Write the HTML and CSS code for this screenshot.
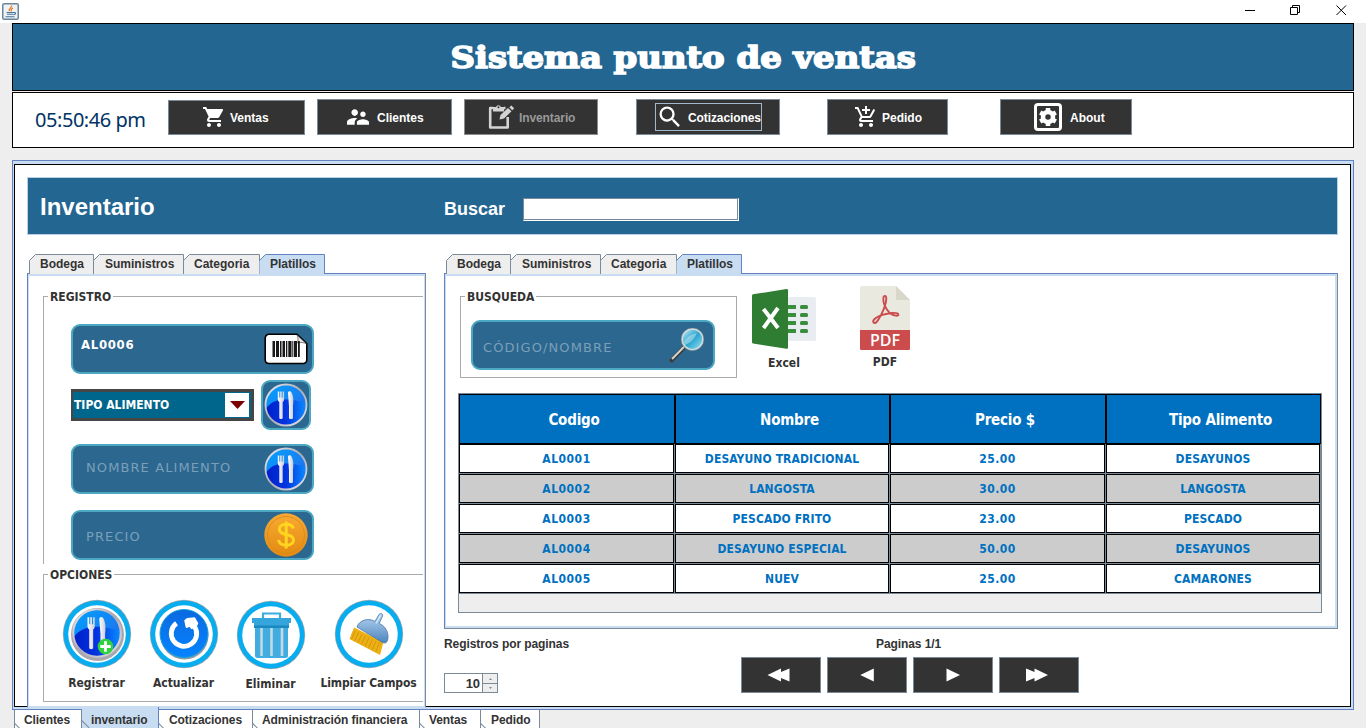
FILE: index.html
```html
<!DOCTYPE html>
<html lang="es">
<head>
<meta charset="utf-8">
<title>Sistema punto de ventas</title>
<link rel="stylesheet" href="styles.css">
</head>
<body>
<svg class="defs" width="0" height="0" aria-hidden="true">
  <defs>
    <linearGradient id="plate" x1="0" y1="0" x2="1" y2="1"><stop offset="0" stop-color="#00a2ff"/><stop offset=".5" stop-color="#1484f5"/><stop offset="1" stop-color="#3560dc"/></linearGradient>
    <linearGradient id="plateLow" x1="0" y1="0" x2="1" y2="0"><stop offset="0" stop-color="#001fc8"/><stop offset=".5" stop-color="#0234e0"/><stop offset="1" stop-color="#0a8cff"/></linearGradient>
    <linearGradient id="silver" x1="0" y1="0" x2="1" y2="1"><stop offset="0" stop-color="#eee"/><stop offset=".5" stop-color="#a9a9b5"/><stop offset="1" stop-color="#e6e6ee"/></linearGradient>
    <linearGradient id="steel" x1="0" y1="0" x2="1" y2="0"><stop offset="0" stop-color="#fff"/><stop offset="1" stop-color="#c9ccd8"/></linearGradient>
    <linearGradient id="coin" x1="0" y1="0" x2="0" y2="1"><stop offset="0" stop-color="#f9aa33"/><stop offset="1" stop-color="#e28a11"/></linearGradient>
    <linearGradient id="lens" x1="0" y1="0" x2="1" y2="1"><stop offset="0" stop-color="#c9eefa"/><stop offset=".5" stop-color="#2aa5cf"/><stop offset="1" stop-color="#9ee6f2"/></linearGradient>
    <linearGradient id="dust" x1="0" y1="0" x2="0" y2="1"><stop offset="0" stop-color="#b5d6f2"/><stop offset="1" stop-color="#4d84bd"/></linearGradient>
    <linearGradient id="refresh" x1="0" y1="0" x2="0" y2="1"><stop offset="0" stop-color="#0b6ae0"/><stop offset="1" stop-color="#0584ff"/></linearGradient>
    <symbol id="cutlery" viewBox="0 0 44 44">
      <circle cx="22" cy="22" r="20" fill="url(#plate)"/>
      <path d="M2.200 25C8 18 14 16.500 22 16.500S36 19 41.800 19A20 20 0 0 1 2.200 25z" fill="url(#plateLow)"/>
      <circle cx="22" cy="22" r="20.500" fill="none" stroke="url(#silver)" stroke-width="1.800"/>
      <g fill="url(#steel)">
        <path d="M13.800 8.500h1.500v6h.9v-6h1.500v6h.9v-6h1.500v7.500c0 1.800-.7 2.500-1.400 3V35c0 1.300-3.400 1.300-3.400 0V19c-.8-.5-1.500-1.200-1.500-3z"/>
        <path d="M24 10c0-1.800 1.800-2.200 3-1.300 2.300 3 2.800 9 2 14.300V35c0 1.300-4 1.300-4 0V23z"/>
      </g>
    </symbol>
    <symbol id="ring" viewBox="0 0 70 70">
      <circle cx="35" cy="35" r="34.200" fill="#a9a9a9"/>
      <circle cx="35" cy="35" r="33.500" fill="#08adf0"/>
      <circle cx="35" cy="35" r="28.800" fill="#fff"/>
    </symbol>
  </defs>
</svg>

<div class="titlebar">
  <svg class="java" width="17" height="17" viewBox="0 0 17 17"><rect x=".75" y=".75" width="15.500" height="15.500" rx="1.500" fill="#eef2f6" stroke="#6b8496" stroke-width="1.500"/><path d="M9.500 2.500c1 2-3.500 3-2 5.500M11 5c-2 1-2.500 1.800-1.500 3.300" fill="none" stroke="#ee8022" stroke-width="1.300"/><path d="M4.500 9.500h7.500M5 11.300h6.200M12 9.500c2.300-.3 2 2-.5 2.200M3.500 13.700h9" fill="none" stroke="#44739a" stroke-width="1.100"/></svg>
  <div class="winctl">
    <svg width="11" height="11" viewBox="0 0 11 11"><path d="M1 5.500h10" stroke="#000" fill="none"/></svg>
    <svg width="11" height="11" viewBox="0 0 11 11"><path d="M.5 2.500h7v7h-7zM2.500 2.500v-2h7v7h-2" stroke="#000" fill="none"/></svg>
    <svg width="11" height="11" viewBox="0 0 11 11"><path d="M.5.5l9.500 9.500M10 .5L.5 10" stroke="#000" fill="none"/></svg>
  </div>
</div>

<header class="brand"><h1>Sistema punto de ventas</h1></header>

<nav class="toolbar">
  <span class="clock">05:50:46 pm</span>
  <button class="nav nav-ventas"><svg width="24" height="24" viewBox="0 0 24 24" fill="#fff"><path d="M7 18c-1.100 0-1.990.9-1.990 2S5.900 22 7 22s2-.9 2-2-.9-2-2-2zM1 2v2h2l3.600 7.590-1.350 2.450c-.16.28-.25.61-.25.96 0 1.100.9 2 2 2h12v-2H7.420c-.14 0-.25-.11-.25-.25l.03-.12.900-1.630h7.450c.75 0 1.410-.41 1.750-1.030l3.580-6.490A1 1 0 0 0 20 4H5.210l-.94-2H1zm16 16c-1.100 0-1.990.9-1.990 2s.89 2 1.990 2 2-.9 2-2-.9-2-2-2z"/></svg>Ventas</button>
  <button class="nav nav-clientes"><svg width="24" height="24" viewBox="0 0 24 24" fill="#fff"><path transform="translate(-1.200 -1.200) scale(1.100)" d="M16.500 12c1.380 0 2.490-1.120 2.490-2.500S17.880 7 16.500 7 14 8.120 14 9.500s1.120 2.500 2.500 2.500zM9 11c1.660 0 2.990-1.340 2.990-3S10.660 5 9 5 6 6.340 6 8s1.340 3 3 3zm7.500 3c-1.830 0-5.500.92-5.500 2.750V19h11v-2.250c0-1.830-3.670-2.750-5.500-2.750zM9 13c-2.330 0-7 1.170-7 3.500V19h7v-2.250c0-.85.33-2.340 2.370-3.470C10.500 13.100 9.660 13 9 13z"/></svg>Clientes</button>
  <button class="nav nav-inventario" disabled><svg width="27" height="26" viewBox="0 0 27 26"><path d="M5 4H2.200v19.500h17.500V13M16 4h1.500" fill="none" stroke="#d3d3d3" stroke-width="2.600" stroke-linejoin="round"/><path d="M5 3h3a2.700 2.700 0 0 1 5 0h3v4.500H5z" fill="#d3d3d3"/><circle cx="10.500" cy="3.200" r="1" fill="#333"/><path d="M11.500 15.500l1-4.500 7.500-7 3.500 3.300-7.500 7.200zM21.300 3.300l2-1.800 2.900 2.800-2 1.900z" fill="#d3d3d3"/></svg>Inventario</button>
  <button class="nav nav-cotizaciones"><span class="focus"><svg width="28" height="28" viewBox="0 0 24 24" fill="#fff"><path d="M15.500 14h-.79l-.28-.27A6.470 6.470 0 0 0 16 9.500 6.500 6.500 0 1 0 9.500 16c1.610 0 3.090-.59 4.230-1.570l.27.280v.790l5 4.990L20.490 19l-4.990-5zm-6 0C7.010 14 5 11.990 5 9.500S7.010 5 9.500 5 14 7.010 14 9.500 11.990 14 9.500 14z"/></svg>Cotizaciones</span></button>
  <button class="nav nav-pedido"><svg width="24" height="24" viewBox="0 0 24 24" fill="#fff"><path d="M11 9h2V6h3V4h-3V1h-2v3H8v2h3v3zm-4 9c-1.100 0-1.990.9-1.990 2S5.900 22 7 22s2-.9 2-2-.9-2-2-2zm10 0c-1.100 0-1.990.9-1.990 2s.89 2 1.990 2 2-.9 2-2-.9-2-2-2zm-9.830-3.250l.03-.12.900-1.630h7.450c.75 0 1.410-.41 1.750-1.030l3.860-7.010L19.420 4h-.01l-1.100 2-2.760 5H8.530l-.13-.27L6.160 6l-.95-2-.94-2H1v2h2l3.600 7.590-1.350 2.450c-.16.280-.25.610-.25.960 0 1.100.9 2 2 2h12v-2H7.420c-.13 0-.25-.11-.25-.25z"/></svg>Pedido</button>
  <button class="nav nav-about"><svg width="28" height="28" viewBox="0 0 28 28"><rect x="1.500" y="1.500" width="25" height="25" rx="2.500" fill="none" stroke="#fff" stroke-width="3"/><circle cx="14" cy="14" r="5" fill="none" stroke="#fff" stroke-width="4.500"/><path d="M14 5v3.500M14 19.500V23M6.200 9.500l3 1.700M18.800 16.800l3 1.700M6.200 18.500l3-1.700M18.800 11.200l3-1.700" stroke="#fff" stroke-width="4.500"/></svg>About</button>
</nav>

<main class="shell">
  <section class="screen">
    <div class="banner">
      <h2>Inventario</h2>
      <label for="buscar">Buscar</label>
      <input id="buscar" class="search" type="text">
    </div>
    <div class="columns">
      <div class="left">
        <div class="tabs">
          <span class="tab w65"><svg width="65" height="20"><path d="M.5 20V6.500L6.500.5H64.500V20" fill="#eee" stroke="#7a8a99"/></svg>Bodega</span>
          <span class="tab w90"><svg width="91" height="20"><path d="M.5 20V6.500L6.500.5H90.500V20" fill="#eee" stroke="#7a8a99"/></svg>Suministros</span>
          <span class="tab w76"><svg width="77" height="20"><path d="M.5 20V6.500L6.500.5H76.500V20" fill="#eee" stroke="#7a8a99"/></svg>Categoria</span>
          <span class="tab w65 on"><svg width="66" height="22"><path d="M.5 22V6.500L6.500.5H65.500V20H64V22z" fill="#c8ddf2"/><path d="M.5 7V6.500L6.500.5H65.500V20" fill="none" stroke="#6382bf"/></svg>Platillos</span>
        </div>
        <div class="pane form-pane">
          <fieldset class="group registro"><legend>REGISTRO</legend>
            <div class="field"><b>AL0006</b>
              <svg width="44" height="32" viewBox="0 0 44 32"><path d="M5 1.200H33L42.800 10.500V27a3.500 3.500 0 0 1-3.500 3.500H5A3.800 3.800 0 0 1 1.200 27V5A3.800 3.800 0 0 1 5 1.200z" fill="#fdfdfd" stroke="#000" stroke-width="1.600"/><path d="M33 2c1.500 3 1 5.500.5 8 3-.8 6-.8 9 1z" fill="#e4e4e4" stroke="#555" stroke-width=".7"/><g fill="#181818"><path d="M8.500 8h2.500v16H8.500zM12 8h3v16h-3zM16 8h1.500v16H16zM18.500 8H21v16h-2.500zM22 8h1.300v16H22zM24.300 8h3.200v16h-3.200zM28.300 8h1v16h-1zM30 8h3v16h-3zM34 8h1.800v16H34z"/></g></svg>
            </div>
            <div class="combo-row">
              <div class="combo"><b>TIPO ALIMENTO</b><span class="drop"><svg width="15" height="8" viewBox="0 0 15 8"><path d="M0 0h15L7.500 8z" fill="#7b0000"/></svg></span></div>
              <div class="field tile"><svg width="44" height="44"><use href="#cutlery"/></svg></div>
            </div>
            <div class="field f-nombre"><span class="ph">NOMBRE ALIMENTO</span><svg width="44" height="44"><use href="#cutlery"/></svg></div>
            <div class="field f-precio"><span class="ph">PRECIO</span>
              <svg width="44" height="44" viewBox="0 0 44 44"><circle cx="22" cy="22" r="21.700" fill="url(#coin)"/><circle cx="22" cy="22" r="18.500" fill="none" stroke="#d98a18" stroke-width=".9"/><path d="M29.300 15.500C28.500 12.500 26 11.300 22.300 11.300c-4 0-7 1.800-7 5 0 7 14.200 3.500 14.200 10.500 0 3.500-3.200 5.400-7.300 5.400s-7-1.700-7.600-5.200M22.200 8.500v27" fill="none" stroke="#ffd51f" stroke-width="3"/></svg>
            </div>
          </fieldset>
          <fieldset class="group opciones"><legend>OPCIONES</legend>
            <div class="action"><svg width="70" height="70" viewBox="0 0 70 70"><use href="#ring"/><circle cx="35.500" cy="35.500" r="26.500" fill="#aaa6ae"/><use href="#cutlery" x="9.500" y="8.500" width="51" height="51"/><circle cx="43.500" cy="47.500" r="7.800" fill="#2fd13c"/><path d="M43.500 42.300v10.400M38.300 47.500h10.400" stroke="#fff" stroke-width="2.800"/></svg><b>Registrar</b></div>
            <div class="action"><svg width="70" height="70" viewBox="0 0 70 70"><use href="#ring"/><circle cx="35.500" cy="36.500" r="24" fill="#8a98a8"/><circle cx="35" cy="34.500" r="24" fill="url(#refresh)" stroke="#18a3dc" stroke-width="1"/><path d="M27.500 24.300A12.700 12.700 0 1 0 45.500 27.500" fill="none" stroke="#fff" stroke-width="4.800"/><path d="M36 21.500l2.500-1.800 7-.6 3 5.200-2 4-4 1-1.500-2.500-3.500 1.500z" fill="#fff" stroke="#fff" stroke-width="1.500" stroke-linejoin="round"/></svg><b>Actualizar</b></div>
            <div class="action low"><svg width="70" height="70" viewBox="0 0 70 70"><use href="#ring"/><path d="M27 18v-4.500h17V18" fill="none" stroke="#3fabdf" stroke-width="2.200"/><path d="M16 18h39v5h-2v4.500H18V23h-2z" fill="#35a5dc"/><path d="M18 25.500h35V28H18z" fill="#1b88c0"/><path d="M19 28h33v27.500a2.500 2.500 0 0 1-2.500 2.500h-28a2.500 2.500 0 0 1-2.500-2.500z" fill="#41ace0"/><path d="M25.500 28v28M35.500 28v28M46 28v28" stroke="#c3d9e4" stroke-width="2.600"/></svg><b>Eliminar</b></div>
            <div class="action wide"><svg width="70" height="70" viewBox="0 0 70 70"><use href="#ring"/><path d="M20 28.500L49.500 43 46 56 15.500 40z" fill="#edaf12"/><path d="M21 32l-3.500 8M24.500 33.500l-4 8.500M28 35.200l-4.200 8.500M31.500 37l-4.200 8.500M35 38.500l-4 9M38.500 40.200l-4 9M42 42l-4 9M45.500 43.500l-3.500 9" stroke="#b98910" stroke-width=".6"/><path d="M23 28c2-7 12-9.500 18-5.500l4-7c1.500-1.800 4.500-.8 3.500 1.500l-3.300 7.500C52 27 55.500 35 53.500 41.500c-1 2.500-2.500 3-5 2z" fill="url(#dust)" stroke="#4776a8" stroke-width=".8"/><path d="M46.500 16.500l-4.500 8" stroke="#dcedfb" stroke-width="1.200"/></svg><b>Limpiar Campos</b></div>
          </fieldset>
        </div>
      </div>
      <div class="right">
        <div class="tabs">
          <span class="tab w65"><svg width="65" height="20"><path d="M.5 20V6.500L6.500.5H64.500V20" fill="#eee" stroke="#7a8a99"/></svg>Bodega</span>
          <span class="tab w90"><svg width="91" height="20"><path d="M.5 20V6.500L6.500.5H90.500V20" fill="#eee" stroke="#7a8a99"/></svg>Suministros</span>
          <span class="tab w76"><svg width="77" height="20"><path d="M.5 20V6.500L6.500.5H76.500V20" fill="#eee" stroke="#7a8a99"/></svg>Categoria</span>
          <span class="tab w65 on"><svg width="66" height="22"><path d="M.5 22V6.500L6.500.5H65.500V20H64V22z" fill="#c8ddf2"/><path d="M.5 7V6.500L6.500.5H65.500V20" fill="none" stroke="#6382bf"/></svg>Platillos</span>
        </div>
        <div class="pane list-pane">
          <div class="tools">
            <fieldset class="group busqueda"><legend>BUSQUEDA</legend>
              <div class="field"><span class="ph">CÓDIGO/NOMBRE</span>
                <svg class="mag" width="36" height="36" viewBox="0 0 36 36"><path d="M2.500 33.500L15 20.500" stroke="#3c3c3c" stroke-width="4" stroke-linecap="round"/><path d="M3 32L15 19.800" stroke="#d8d2c8" stroke-width="2"/><circle cx="23.500" cy="12.300" r="10.500" fill="url(#lens)" stroke="#d4dde0" stroke-width="1.800"/><circle cx="23.500" cy="12.300" r="11.400" fill="none" stroke="#5c7078" stroke-width=".6"/><path d="M15 15c3-5 8-8 13-9-2 5-6 10-12 12z" fill="#fff" opacity=".35"/></svg>
              </div>
            </fieldset>
            <div class="export excel"><svg width="64" height="60" viewBox="0 0 64 60"><rect x="34" y="8" width="30" height="44" rx="1.500" fill="#e9edf1"/><path d="M36 16h8v4h-8zM36 24h8v4h-8zM36 32h8v4h-8zM36 40h8v4h-8z" fill="#388e3c"/><g fill="#388e3c"><rect x="48" y="16" width="8" height="4" rx="1.500"/><rect x="48" y="24" width="8" height="4" rx="1.500"/><rect x="48" y="32" width="8" height="4" rx="1.500"/><rect x="48" y="40" width="8" height="4" rx="1.500"/></g><path d="M0 6.500Q0 5.500 1 5.300L34.500 0Q36 0 36 1.200V59Q36 60 34.500 59.800L1 54.500Q0 54 0 53z" fill="#2e7d32"/><path d="M11.500 20l14.500 19M26 19L11.500 39" stroke="#fff" stroke-width="4"/></svg><b>Excel</b></div>
            <div class="export pdf">
              <div class="pdf-icon"><svg width="50" height="64" viewBox="0 0 50 64"><path d="M1.500 0H36L50 14V44H0V1.500Q0 0 1.500 0z" fill="#e9e9e0"/><path d="M36 0L50 14H36z" fill="#d9d7ca"/><path d="M0 44h50v18.500Q50 64 48.500 64h-47Q0 64 0 62.500z" fill="#cc4b4c"/><path d="M13.500 36.500c-1.500-2 2.500-5.500 8-7.300 7-2.300 16-3.200 16.800-1 .8 2.300-4.300 2-8.500-1.300-4-3.200-7-10.500-6.500-14.500.3-3.500 3-3.300 3 .3 0 5-3.600 14.500-8 21-1.500 2.400-3.600 4.400-4.800 2.800z" fill="none" stroke="#cc4b4c" stroke-width="1.900"/></svg><span>PDF</span></div>
              <b>PDF</b></div>
          </div>
          <div class="grid">
            <div class="hrow"><span>Codigo</span><span>Nombre</span><span>Precio $</span><span>Tipo Alimento</span></div>
            <div class="row"><span class="num">AL0001</span><span>DESAYUNO TRADICIONAL</span><span class="num">25.00</span><span>DESAYUNOS</span></div>
            <div class="row alt"><span class="num">AL0002</span><span>LANGOSTA</span><span class="num">30.00</span><span>LANGOSTA</span></div>
            <div class="row"><span class="num">AL0003</span><span>PESCADO FRITO</span><span class="num">23.00</span><span>PESCADO</span></div>
            <div class="row alt"><span class="num">AL0004</span><span>DESAYUNO ESPECIAL</span><span class="num">50.00</span><span>DESAYUNOS</span></div>
            <div class="row"><span class="num">AL0005</span><span>NUEV</span><span class="num">25.00</span><span>CAMARONES</span></div>
          </div>
        </div>
        <div class="footer">
          <div class="perpage"><span>Registros por paginas</span>
            <div class="spinner"><b>10</b><div class="steps"><i><svg width="5" height="3"><path d="M1 3L2.500 1 4 3z" fill="#7a8a99"/></svg></i><i><svg width="5" height="3"><path d="M1 0L2.500 2 4 0z" fill="#7a8a99"/></svg></i></div></div>
          </div>
          <div class="pager"><span>Paginas 1/1</span>
            <div class="pbtns">
              <button><svg width="24" height="14" viewBox="0 0 24 14"><path d="M.5 7L14 .5V4L22.500.5v13L14 10v3.500z" fill="#fff"/></svg></button>
              <button><svg width="24" height="14" viewBox="0 0 24 14"><path d="M7.300 7L20.800.5v13z" fill="#fff"/></svg></button>
              <button><svg width="24" height="14" viewBox="0 0 24 14"><path d="M21 7L7.500.5v13z" fill="#fff"/></svg></button>
              <button><svg width="24" height="14" viewBox="0 0 24 14"><path d="M23 7L9.500.5V4L1 .5v13L9.500 10v3.500z" fill="#fff"/></svg></button>
            </div>
          </div>
        </div>
      </div>
    </div>
  </section>
</main>

<div class="bottom-tabs">
  <span class="b1">Clientes</span><span class="b2 on">inventario</span><span class="b3">Cotizaciones</span><span class="b4">Administración financiera</span><span class="b5">Ventas</span><span class="b6">Pedido</span>
</div>
</body>
</html>
```

FILE: styles.css
```css
* { box-sizing: border-box; }
body {
  margin: 0; width: 1366px; height: 728px; overflow: hidden;
  display: flex; flex-direction: column;
  background: #eee; color: #333;
  font: bold 12px/16px "Liberation Sans", Arial, sans-serif;
}
svg { display: block; flex: none; }
.defs { position: absolute; }
h1, h2 { margin: 0; }
button { font: inherit; padding: 0; margin: 0; }

.titlebar { flex: none; height: 23px; background: #fff; display: flex; justify-content: space-between; padding: 3px 19px 0 2px; }
.winctl { display: flex; gap: 35px; padding-top: 2px; }

.brand { flex: none; height: 68px; margin: 0 12px; border: 1px solid #000; background: #236692; display: flex; justify-content: center; }
.brand h1 { font: bold 30px/68px "DejaVu Serif", serif; color: #fff; white-space: nowrap; -webkit-text-stroke: 1.6px #fff; transform: scaleX(1.128); }

.toolbar { flex: none; height: 56px; margin: 1px 12px 0; border: 1px solid #000; background: #fff; display: flex; align-items: flex-start; padding-top: 6px; }
.clock { font: 20px/28px "Noto Sans", sans-serif; letter-spacing: -.45px; color: #003366; width: 133px; margin: 7px 0 0 22px; white-space: nowrap; }
.nav { height: 36px; background: #333; color: #fff; border: 1px solid #7a8a99; display: flex; align-items: center; white-space: nowrap; flex: none; padding-top: 2px; }
.nav svg { margin-bottom: 2px; }
.nav-ventas { width: 137px; height: 35px; margin: 1px 12px 0 0; padding: 0 0 0 33px; gap: 4px; }
.nav-clientes { width: 135px; margin-right: 12px; padding-left: 28px; gap: 7px; }
.nav-inventario { width: 134px; margin-right: 38px; padding-left: 23px; gap: 4px; color: #999; border-color: #8c8c8c; letter-spacing: -.1px; }
.nav-cotizaciones { width: 144px; margin-right: 47px; padding: 0 0 0 18px; letter-spacing: -.1px; }
.focus { width: 107px; height: 28px; border: 1px solid #a3b8cc; display: flex; align-items: center; gap: 4px; padding-top: 2px; }
.nav-pedido { width: 121px; margin-right: 52px; padding-left: 26px; gap: 4px; }
.nav-about { width: 132px; padding-left: 33px; gap: 8px; }

.shell { flex: none; height: 550px; margin: 12px 12px 0; border: 1px solid #6382bf; background: #c8ddf2; padding: 3px 2px 2px 1px; }
.screen { height: 543px; border: 1px solid #000; background: #fff; padding: 12px 12px 0; display: flex; flex-direction: column; }
.banner { flex: none; height: 58px; border: 1px solid #b8cfe5; background: #236692; color: #fff; display: flex; padding-left: 12px; }
.banner h2 { font: bold 24px/58px "Liberation Sans", sans-serif; width: 404px; }
.banner label { font: bold 18px/62px "Liberation Sans", sans-serif; width: 79px; }
.search { width: 216px; height: 23px; margin-top: 20px; border: 1px solid #7a8a99; border-right-color: #fff; border-bottom-color: #fff; box-shadow: inset -1px -1px #7a8a99; background: #fff; padding: 0; }

.columns { flex: 1; display: flex; gap: 18px; padding-top: 19px; }
.left { width: 399px; }
.right { width: 894px; }
.tabs { display: flex; height: 19px; padding-left: 2px; }
.tab { position: relative; isolation: isolate; z-index: 1; padding-left: 11px; line-height: 20px; white-space: nowrap; }
.tab svg { position: absolute; left: 0; top: 0; z-index: -1; }
.w65 { width: 64px; }
.w90 { width: 90px; padding-left: 12px; }
.w76 { width: 76px; }
.tab.on { z-index: 2; }

.pane { border: 1px solid #6382bf; border-right-color: #7a8a99; background: #fff; box-shadow: inset 0 0 0 1px #c8ddf2, inset -1px 2px #c8ddf2; }
.form-pane { height: 435px; border-bottom: 1px solid #c8ddf2; padding: 3px 2px 0 15px; position: relative; }
.list-pane { height: 356px; border-bottom-color: #7a8a99; box-shadow: inset 0 0 0 1px #c8ddf2, inset -2px -2px #c8ddf2, inset 0 2px #c8ddf2; padding: 12px 14px 0 13px; }

.group { margin: 0; padding: 0; border: 1px solid #aaa; min-width: 0; }
legend { font: bold 12px/17px "DejaVu Sans Condensed", "DejaVu Sans", sans-serif; font-stretch: condensed; padding: 3px 2px 0 2px; margin-left: 4px; }
.registro { height: 278px; border-right: 0; border-bottom: 0; padding: 18px 0 0 27px; margin-top: 9px; }
.registro legend { margin-left: -23px; }
.opciones { height: 138px; border-right: 0; display: flex; }
.field { position: relative; width: 243px; height: 50px; border: 2px solid #4ba8c2; border-radius: 9px; background: #2b678f; display: flex; align-items: center; justify-content: space-between; padding: 0 4px 0 8px; }
b, .grid { font-family: "DejaVu Sans Condensed", "DejaVu Sans", sans-serif; font-stretch: condensed; }
.field b { font-size: 13px; letter-spacing: .7px; color: #fff; padding-bottom: 8px; }
.ph { font: 13px/18px "DejaVu Sans", sans-serif; letter-spacing: 1.1px; color: #7b9fb9; padding-left: 5px; white-space: nowrap; }
.combo-row { display: flex; gap: 7px; margin-top: 6px; height: 50px; align-items: center; }
.combo { width: 183px; height: 32px; border: 3px solid #464646; border-left-width: 2px; background: #00668b; color: #fff; display: flex; justify-content: space-between; align-items: center; padding: 0 2px 0 1px; white-space: nowrap; }
.drop { width: 24px; height: 24px; background: #fff; display: flex; align-items: center; justify-content: center; }
.tile { width: 50px; padding: 0 1px; }
.f-nombre { margin-top: 14px; }
.f-nombre .ph { padding-bottom: 3px; }
.f-precio { margin-top: 16px; }
.f-precio .ph { padding-top: 4px; }

.action { width: 87px; display: flex; flex-direction: column; align-items: center; padding-top: 15px; gap: 6px; white-space: nowrap; }
.action:first-of-type { margin-left: 9px; }
.action.low { padding-top: 16px; }
.action.wide { width: 109px; letter-spacing: -.1px; }

.tools { display: flex; height: 107px; padding-left: 2px; }
.busqueda { width: 277px; height: 92px; padding: 14px 0 0 10px; }
.busqueda legend { margin-left: -6px; }
.busqueda .field { width: 244px; padding-right: 8px; }
.busqueda .ph { padding: 5px 0 0 2px; }
.export { display: flex; flex-direction: column; align-items: center; }
.excel { margin: 3px 0 0 15px; width: 64px; gap: 6px; }
.pdf { margin: 0 0 0 44px; width: 50px; gap: 4px; }
.pdf-icon { position: relative; }
.pdf-icon span { position: absolute; left: 0; right: 0; bottom: 0; font: 600 16px/20px "Open Sans", "Noto Sans", sans-serif; color: #fff; text-align: center; }

.grid { width: 864px; height: 220px; border: 1px solid #7a8a99; background: #eee; }
.hrow, .row { display: grid; grid-template-columns: 216px 215px 216px 215px; }
.hrow span { height: 50px; border: 1px solid #000; background: #0070c0; color: #fff; font-size: 15px; letter-spacing: -.2px; line-height: 51px; text-align: center; padding-left: 14px; }
.row { background: #7a8a99; height: 30px; }
.row span { height: 29px; margin-right: 1px; border: 1px solid #000; background: #fff; color: #0070c0; line-height: 29px; letter-spacing: .1px; text-align: center; }
.row .num { letter-spacing: .5px; }
.row.alt span { background: #ccc; }

.footer { display: flex; padding-top: 7px; letter-spacing: -.08px; }
.perpage { width: 297px; }
.spinner { width: 54px; height: 20px; margin-top: 21px; display: flex; }
.spinner b { width: 38px; font: bold 13px/20px "Liberation Sans", sans-serif; text-align: right; padding-right: 2px; border: 1px solid #7a8a99; border-right: 0; }
.steps { width: 16px; border: 1px solid #7a8a99; }
.steps i { display: flex; height: 9px; align-items: center; justify-content: center; background: #eee; }
.steps i + i { border-top: 1px solid #7a8a99; }
.pager > span { display: block; margin-left: 135px; }
.pbtns { display: flex; gap: 6px; margin-top: 5px; }
.pbtns button { width: 80px; height: 36px; border: 1px solid #7a8a99; background: #333; display: flex; align-items: center; justify-content: center; padding-right: 4px; }

.bottom-tabs { flex: none; display: flex; height: 18px; padding-left: 14px; white-space: nowrap; letter-spacing: -.08px; }
.bottom-tabs span { position: relative; background: #fff; border-right: 1px solid #7a8a99; line-height: 20px; padding-left: 10px; overflow: hidden; }
.bottom-tabs span::before { content: ""; position: absolute; left: -1px; top: 12px; width: 12px; height: 1px; background: #7a8a99; transform: rotate(45deg); transform-origin: 0 0; }
.bottom-tabs .b1 { width: 68px; border-left: 1px solid #7a8a99; padding-left: 9px; }
.bottom-tabs .b2 { width: 77px; background: #c8ddf2; border-right-color: #6382bf; padding-left: 9px; margin-top: -3px; padding-top: 3px; }
.b3 { width: 94px; }
.bottom-tabs .b4 { width: 167px; padding-left: 9px; }
.bottom-tabs .b5 { width: 61px; padding-left: 9px; }
.b6 { width: 59px; }
```
